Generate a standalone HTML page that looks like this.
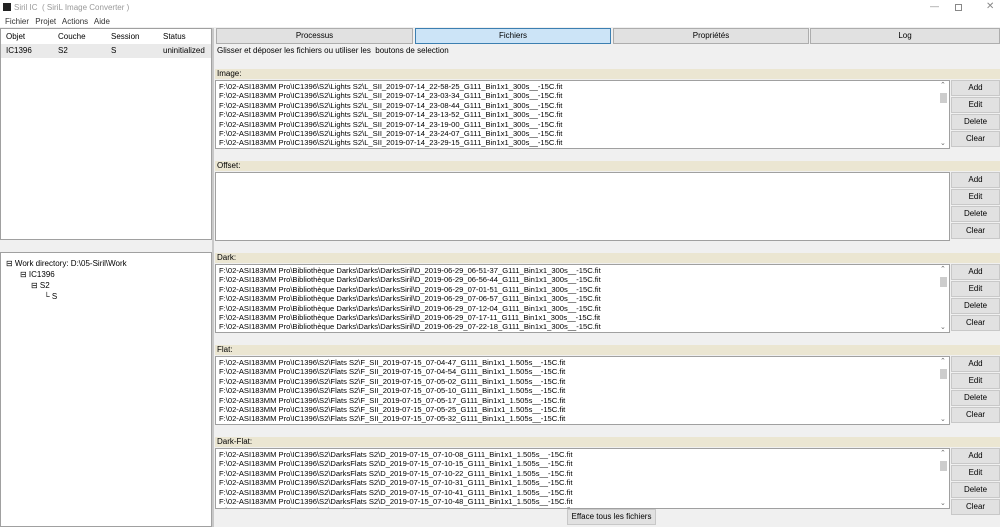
<!DOCTYPE html><html><head><meta charset="utf-8"><style>
*{margin:0;padding:0;box-sizing:border-box}
body{width:1000px;height:527px;background:#f0f0f0;font-family:"Liberation Sans",sans-serif;font-size:8px;color:#000;position:relative;overflow:hidden}
.a{position:absolute}
.hdr{position:absolute;left:215px;width:785px;height:10px;background:#ebe6d2;font-size:8px;line-height:10px;padding-left:2px}
.lst{position:absolute;left:215px;width:735px;height:69px;background:#fff;border:1px solid #a0a0a0;overflow:hidden;padding:1px 0 0 3px;font-size:7.6px;line-height:9.4px;white-space:nowrap}
.sb{position:absolute;right:0;top:0;width:11px;height:100%;background:#fff}
.sb i{position:absolute;left:2px;top:12px;width:7px;height:10px;background:#cdcdcd}
.sb b,.sb u{position:absolute;left:2px;font-size:7px;color:#666;font-weight:normal;text-decoration:none}
.sb b{top:0}.sb u{bottom:0}
.btn{position:absolute;left:951px;width:49px;height:16px;background:#e1e1e1;border:1px solid #c8c8c8;text-align:center;line-height:14px;font-size:8px}
.tab{position:absolute;top:28px;height:16px;background:#e1e1e1;border:1px solid #adadad;text-align:center;line-height:14px;font-size:8px}
</style></head><body>
<div class="a" style="left:0;top:0;width:1000px;height:15px;background:#fff"></div>
<div class="a" style="left:3px;top:3px;width:8px;height:8px;background:#222"></div>
<div class="a" style="left:14px;top:3px;color:#999;font-size:8px">Siril IC &nbsp;( SiriL Image Converter )</div>
<div class="a" style="left:930px;top:1px;color:#888;font-size:9px">—</div>
<div class="a" style="left:955px;top:4px;width:7px;height:7px;border:1px solid #888"></div>
<div class="a" style="left:986px;top:1px;color:#888;font-size:10px">✕</div>
<div class="a" style="left:0;top:15px;width:1000px;height:12px;background:#fff"></div>
<div class="a" style="left:5px;top:17px;font-size:8px;color:#333;word-spacing:4px">Fichier Projet Actions Aide</div>
<div class="a" style="left:0;top:28px;width:212px;height:212px;background:#fff;border:1px solid #a0a0a0"></div>
<div class="a" style="left:1px;top:30px;width:210px;height:14px;font-size:8px;line-height:14px"><span class="a" style="left:5px">Objet</span><span class="a" style="left:57px">Couche</span><span class="a" style="left:110px">Session</span><span class="a" style="left:162px">Status</span></div>
<div class="a" style="left:1px;top:44px;width:210px;height:14px;background:#eaeaea;font-size:8px;line-height:14px"><span class="a" style="left:5px">IC1396</span><span class="a" style="left:57px">S2</span><span class="a" style="left:110px">S</span><span class="a" style="left:162px">uninitialized</span></div>
<div class="a" style="left:0;top:252px;width:212px;height:275px;background:#fff;border:1px solid #a0a0a0"></div>
<div class="a" style="left:6px;top:258px;font-size:8px;line-height:11px">⊟ Work directory: D:\05-Siril\Work</div>
<div class="a" style="left:20px;top:269px;font-size:8px;line-height:11px">⊟ IC1396</div>
<div class="a" style="left:31px;top:280px;font-size:8px;line-height:11px">⊟ S2</div>
<div class="a" style="left:44px;top:291px;font-size:8px;line-height:11px">└ S</div>
<div class="a" style="left:212px;top:28px;width:2px;height:499px;background:#c8c8c8"></div>
<div class="tab" style="left:216px;width:197px">Processus</div>
<div class="tab" style="left:415px;width:196px;background:#cce4f7;border-color:#3c7fb1">Fichiers</div>
<div class="tab" style="left:613px;width:196px">Propriétés</div>
<div class="tab" style="left:810px;width:190px">Log</div>
<div class="a" style="left:217px;top:46px;font-size:8px">Glisser et déposer les fichiers ou utiliser les &nbsp;boutons de selection</div>

<div class="hdr" style="top:69px">Image:</div>
<div class="lst" style="top:80px"><div class="sb"><b>⌃</b><i></i><u>⌄</u></div>
F:\02-ASI183MM Pro\IC1396\S2\Lights S2\L_SII_2019-07-14_22-58-25_G111_Bin1x1_300s__-15C.fit<br>F:\02-ASI183MM Pro\IC1396\S2\Lights S2\L_SII_2019-07-14_23-03-34_G111_Bin1x1_300s__-15C.fit<br>F:\02-ASI183MM Pro\IC1396\S2\Lights S2\L_SII_2019-07-14_23-08-44_G111_Bin1x1_300s__-15C.fit<br>F:\02-ASI183MM Pro\IC1396\S2\Lights S2\L_SII_2019-07-14_23-13-52_G111_Bin1x1_300s__-15C.fit<br>F:\02-ASI183MM Pro\IC1396\S2\Lights S2\L_SII_2019-07-14_23-19-00_G111_Bin1x1_300s__-15C.fit<br>F:\02-ASI183MM Pro\IC1396\S2\Lights S2\L_SII_2019-07-14_23-24-07_G111_Bin1x1_300s__-15C.fit<br>F:\02-ASI183MM Pro\IC1396\S2\Lights S2\L_SII_2019-07-14_23-29-15_G111_Bin1x1_300s__-15C.fit</div>
<div class="btn" style="top:80px">Add</div><div class="btn" style="top:97px">Edit</div><div class="btn" style="top:114px">Delete</div><div class="btn" style="top:131px">Clear</div>

<div class="hdr" style="top:161px">Offset:</div>
<div class="lst" style="top:172px"></div>
<div class="btn" style="top:172px">Add</div><div class="btn" style="top:189px">Edit</div><div class="btn" style="top:206px">Delete</div><div class="btn" style="top:223px">Clear</div>

<div class="hdr" style="top:253px">Dark:</div>
<div class="lst" style="top:264px"><div class="sb"><b>⌃</b><i></i><u>⌄</u></div>
F:\02-ASI183MM Pro\Bibliothèque Darks\Darks\DarksSiril\D_2019-06-29_06-51-37_G111_Bin1x1_300s__-15C.fit<br>F:\02-ASI183MM Pro\Bibliothèque Darks\Darks\DarksSiril\D_2019-06-29_06-56-44_G111_Bin1x1_300s__-15C.fit<br>F:\02-ASI183MM Pro\Bibliothèque Darks\Darks\DarksSiril\D_2019-06-29_07-01-51_G111_Bin1x1_300s__-15C.fit<br>F:\02-ASI183MM Pro\Bibliothèque Darks\Darks\DarksSiril\D_2019-06-29_07-06-57_G111_Bin1x1_300s__-15C.fit<br>F:\02-ASI183MM Pro\Bibliothèque Darks\Darks\DarksSiril\D_2019-06-29_07-12-04_G111_Bin1x1_300s__-15C.fit<br>F:\02-ASI183MM Pro\Bibliothèque Darks\Darks\DarksSiril\D_2019-06-29_07-17-11_G111_Bin1x1_300s__-15C.fit<br>F:\02-ASI183MM Pro\Bibliothèque Darks\Darks\DarksSiril\D_2019-06-29_07-22-18_G111_Bin1x1_300s__-15C.fit</div>
<div class="btn" style="top:264px">Add</div><div class="btn" style="top:281px">Edit</div><div class="btn" style="top:298px">Delete</div><div class="btn" style="top:315px">Clear</div>

<div class="hdr" style="top:345px">Flat:</div>
<div class="lst" style="top:356px"><div class="sb"><b>⌃</b><i></i><u>⌄</u></div>
F:\02-ASI183MM Pro\IC1396\S2\Flats S2\F_SII_2019-07-15_07-04-47_G111_Bin1x1_1.505s__-15C.fit<br>F:\02-ASI183MM Pro\IC1396\S2\Flats S2\F_SII_2019-07-15_07-04-54_G111_Bin1x1_1.505s__-15C.fit<br>F:\02-ASI183MM Pro\IC1396\S2\Flats S2\F_SII_2019-07-15_07-05-02_G111_Bin1x1_1.505s__-15C.fit<br>F:\02-ASI183MM Pro\IC1396\S2\Flats S2\F_SII_2019-07-15_07-05-10_G111_Bin1x1_1.505s__-15C.fit<br>F:\02-ASI183MM Pro\IC1396\S2\Flats S2\F_SII_2019-07-15_07-05-17_G111_Bin1x1_1.505s__-15C.fit<br>F:\02-ASI183MM Pro\IC1396\S2\Flats S2\F_SII_2019-07-15_07-05-25_G111_Bin1x1_1.505s__-15C.fit<br>F:\02-ASI183MM Pro\IC1396\S2\Flats S2\F_SII_2019-07-15_07-05-32_G111_Bin1x1_1.505s__-15C.fit</div>
<div class="btn" style="top:356px">Add</div><div class="btn" style="top:373px">Edit</div><div class="btn" style="top:390px">Delete</div><div class="btn" style="top:407px">Clear</div>

<div class="hdr" style="top:437px">Dark-Flat:</div>
<div class="lst" style="top:448px;height:61px"><div class="sb"><b>⌃</b><i></i><u>⌄</u></div>
F:\02-ASI183MM Pro\IC1396\S2\DarksFlats S2\D_2019-07-15_07-10-08_G111_Bin1x1_1.505s__-15C.fit<br>F:\02-ASI183MM Pro\IC1396\S2\DarksFlats S2\D_2019-07-15_07-10-15_G111_Bin1x1_1.505s__-15C.fit<br>F:\02-ASI183MM Pro\IC1396\S2\DarksFlats S2\D_2019-07-15_07-10-22_G111_Bin1x1_1.505s__-15C.fit<br>F:\02-ASI183MM Pro\IC1396\S2\DarksFlats S2\D_2019-07-15_07-10-31_G111_Bin1x1_1.505s__-15C.fit<br>F:\02-ASI183MM Pro\IC1396\S2\DarksFlats S2\D_2019-07-15_07-10-41_G111_Bin1x1_1.505s__-15C.fit<br>F:\02-ASI183MM Pro\IC1396\S2\DarksFlats S2\D_2019-07-15_07-10-48_G111_Bin1x1_1.505s__-15C.fit<br>F:\02-ASI183MM Pro\IC1396\S2\DarksFlats S2\D_2019-07-15_07-10-55_G111_Bin1x1_1.505s__-15C.fit</div>
<div class="btn" style="top:448px">Add</div><div class="btn" style="top:465px">Edit</div><div class="btn" style="top:482px">Delete</div><div class="btn" style="top:499px">Clear</div>
<div class="btn" style="left:567px;top:509px;width:89px;height:16px">Efface tous les fichiers</div>
</body></html>
